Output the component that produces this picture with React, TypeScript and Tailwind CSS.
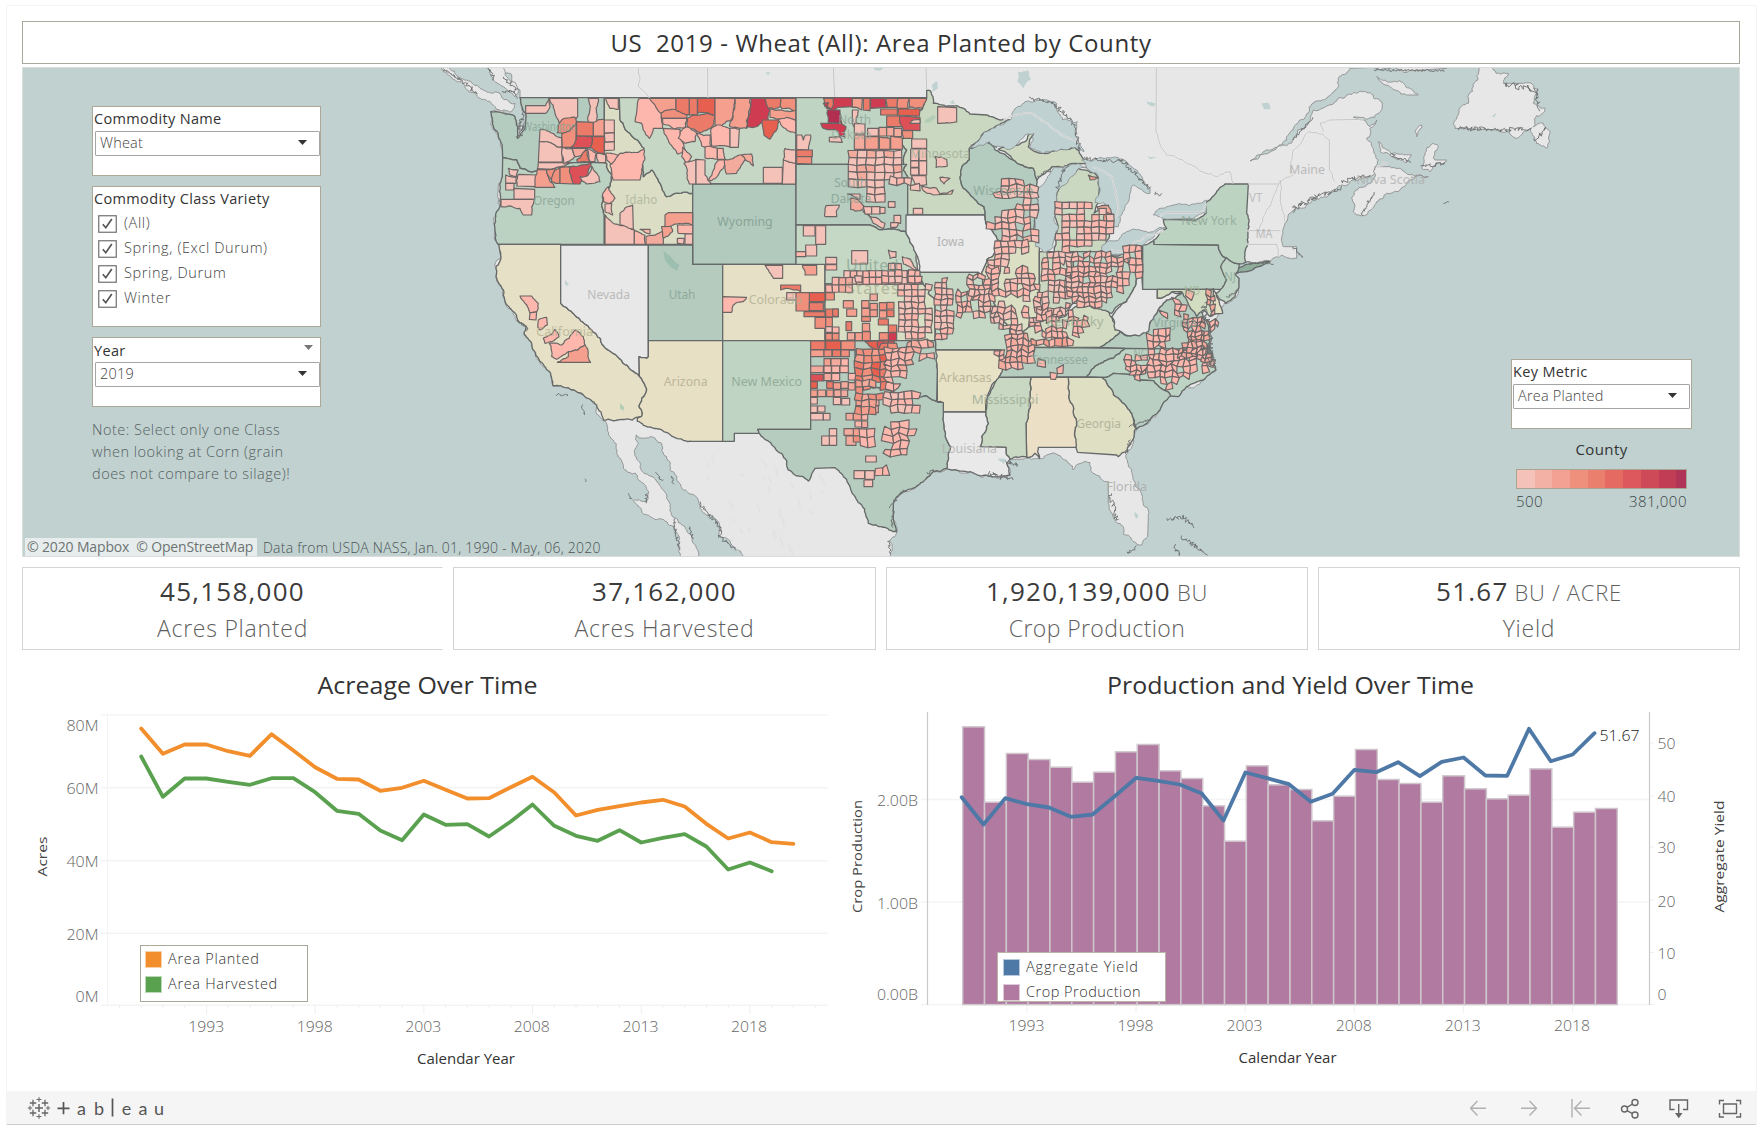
import React from "react";

type Pt = [number, number];

const RAMP = ["#f4c2b8", "#feb7ad", "#f3ab9d", "#f5a08f", "#f08f7c", "#ec7a68", "#e7604f", "#dd5057", "#cf3c52", "#b22f52"];

const hash = (a: number, b: number, s = 0) => {
  const v = Math.sin(a * 12.9898 + b * 78.233 + s * 37.719) * 43758.5453;
  return v - Math.floor(v);
};

const parse = (s: string): Pt[] => s.trim().split(/\s+/).map((p) => p.split(",").map(Number) as Pt);

/* Breaks long slanted segments into small irregular steps; borders that share end points stay identical. */
const roughen = (pts: Pt[], amp: number, closed = true): Pt[] => {
  const out: Pt[] = [];
  const split = (a: Pt, b: Pt, k: number): void => {
    const dx = b[0] - a[0];
    const dy = b[1] - a[1];
    const len = Math.hypot(dx, dy);
    if (len < 8 || k > 6 || (k === 0 && Math.min(Math.abs(dx), Math.abs(dy)) < Math.max(3, len * 0.07))) {
      out.push(a);
      return;
    }
    const h = (hash(a[0] + b[0], a[1] + b[1]) - 0.5) * Math.min(len, 60) * amp;
    const sx = Math.sign(dx * 1000 + dy) || 1;
    const m: Pt = [(a[0] + b[0]) / 2 - (dy / len) * h * sx, (a[1] + b[1]) / 2 + (dx / len) * h * sx];
    split(a, m, k + 1);
    split(m, b, k + 1);
  };
  const n = pts.length;
  for (let i = 0; i < (closed ? n : n - 1); i++) split(pts[i], pts[(i + 1) % n], 0);
  if (!closed) out.push(pts[n - 1]);
  return out;
};

const toD = (pts: Pt[], closed = true) => "M" + pts.map((p) => p[0].toFixed(1) + "," + p[1].toFixed(1)).join("L") + (closed ? "Z" : "");

const inside = (x: number, y: number, poly: Pt[]) => {
  let r = false;
  for (let i = 0, j = poly.length - 1; i < poly.length; j = i++) {
    const [xi, yi] = poly[i];
    const [xj, yj] = poly[j];
    if (yi > y !== yj > y && x < ((xj - xi) * (y - yi)) / (yj - yi) + xi) r = !r;
  }
  return r;
};

/* ---------- land ---------- */
const LAND: string[] = [
  "185,-20 190,10 180,30 215,45 222,70 240,90 240,113 248,150 232,235 225,170 152,155 157,180 175,225 187,265 188,292 187,350 180,440 165,510 175,553 183,590 168,650 190,690 195,725 235,785 258,800 252,820 275,850 277,865 300,905 332,940 340,978 385,983 430,1005 470,1035 490,1082 510,1130 530,1180 550,1225 610,1270 625,1300 615,1325 580,1322 630,1370 660,1375 700,1400 715,1500 780,1500 740,1410 690,1340 670,1290 600,1220 588,1125 610,1135 630,1130 665,1150 690,1230 730,1290 775,1320 780,1340 830,1380 840,1430 880,1460 910,1500 1345,1500 1350,1440 1370,1415 1360,1380 1360,1330 1390,1295 1450,1265 1480,1235 1520,1225 1590,1235 1660,1250 1710,1245 1700,1210 1760,1193 1820,1185 1870,1198 1900,1230 1950,1208 2005,1265 2005,1330 2040,1390 2080,1445 2105,1455 2123,1430 2125,1370 2100,1290 2075,1230 2062,1180 2088,1108 2160,1050 2192,1008 2240,980 2328,930 2310,870 2300,800 2340,760 2352,730 2395,700 2397,655 2385,643 2397,612 2420,605 2510,590 2570,595 2570,560 2530,560 2525,535 2535,490 2560,450 2620,415 2680,395 2705,375 2740,360 2805,340 2815,300 2780,235 2810,180 2790,200 2740,172 2780,178 2820,155 2825,125 2790,98 2720,105 2620,150 2560,235 2510,262 2430,303 2470,275 2540,240 2580,180 2620,130 2685,90 2695,60 2720,40 2730,25 2800,22 2920,32 3020,25 3020,-20",
  "0,20 30,25 80,60 120,85 180,100 225,130 215,155 170,148 110,105 60,65 10,35",
  "115,-10 150,30 160,60 190,80 225,110 235,95 200,50 190,-10",
  "2805,320 2850,320 2940,345 2965,350 2880,390 2810,425 2765,468 2740,455 2735,415 2790,370",
  "2945,325 2980,250 2995,260 2985,300 3020,300 2970,335",
  "2815,245 2840,270 2915,285 2895,308 2820,275",
  "2810,50 2880,62 2935,105 2900,105 2840,75",
  "3125,-10 3100,80 3085,130 3040,190 3045,205 3180,210 3230,235 3270,205 3285,240 3300,255 3320,265 3330,220 3310,190 3280,200 3315,145 3280,130 3295,90 3250,70 3190,70 3205,40 3160,30 3165,-10",
  "2925,215 2945,195 2930,230",
];
const WATERS: string[] = [
  "1588,265 1640,215 1710,180 1755,125 1790,120 1850,132 1868,180 1912,185 1908,228 1932,275 1905,262 1860,268 1810,280 1768,262 1782,220 1755,225 1735,250 1700,268 1665,262 1640,248",
  "1785,400 1840,325 1900,312 1945,322 1885,360 1850,400 1845,440 1855,500 1840,560 1810,577 1787,560 1785,470 1795,420",
  "1925,300 1975,295 2060,305 2090,330 2130,385 2130,400 2080,375 2070,400 2040,470 2035,500 2015,500 2005,440 1965,428 1978,400 1970,340 1940,325",
  "1985,560 2060,515 2175,503 2110,555 2050,582 2000,585",
  "2140,465 2180,440 2270,430 2300,420 2298,460 2260,475 2180,478 2160,470",
  "1735,35 1765,30 1772,60 1750,85 1732,65", "1475,75 1492,65 1495,85 1478,95", "1540,120 1530,130 1545,132",
  "2120,122 2150,135 2135,140", "2465,130 2485,128 2490,148 2472,148", "2120,290 2150,292 2130,298",
  "1668,1195 1700,1198 1690,1212", "2085,1355 2095,1365 2088,1378", "975,38 990,36 985,46", "375,660 387,672 380,680", "1300,25 1335,22 1320,32",
  "3160,165 3170,160 3155,172",
];
const FAINT: string[] = [
  "595,20 600,60 595,80 630,113", "803,20 803,113", "1180,20 1184,113", "1458,20 1460,90", "2149,20 2148,215 2180,285 2265,320 2330,350 2370,335 2378,370",
  "1690,180 1760,158 1920,250", "1960,320 2015,350 2032,460 2020,490", "2010,568 2045,575 2080,550 2170,510", "2160,470 2180,458 2280,458 2300,432",
  "2425,372 2515,372 2540,352 2560,345", "2515,372 2500,410 2470,470 2457,512 2520,512", "2420,512 2457,512", "2520,360 2527,450 2535,485", "2420,553 2510,553 2515,590",
  "2555,340 2560,270 2605,215 2650,225 2668,240 2668,330 2685,365", "2650,215 2640,190 2670,180 2770,178", "2810,320 2840,310 2825,305",
];

/* ---------- states ---------- */
const STATES: [string, string][] = [
  ["#b4ccbf", "240,113 493,113 493,308 400,308 335,328 297,330 275,337 240,325 230,300 188,292 187,265 175,225 157,180 152,155 225,170 232,235 255,205 258,165 248,150"],
  ["#bbd1c1", "188,292 230,300 240,325 275,337 297,330 335,328 400,308 493,308 500,310 515,345 510,380 487,410 493,465 493,553 175,553 165,510 180,440 187,350"],
  ["#e6e0c6", "175,553 362,553 362,730 598,948 620,988 605,1015 597,1040 607,1060 604,1070 490,1080 470,1035 430,1005 385,983 340,978 332,940 300,905 277,865 275,850 252,820 258,800 235,785 195,725 190,690 168,650 183,590"],
  ["#e8e8e8", "362,555 625,555 625,890 620,895 597,890 598,948 362,730"],
  ["#dbdec4", "493,113 538,113 540,180 570,220 612,265 600,300 610,350 635,330 660,370 680,410 758,400 758,553 493,553 493,465 487,410 510,380 515,345 500,310 493,308"],
  ["#c6d8c5", "538,113 1068,113 1068,372 758,372 758,400 680,410 660,370 635,330 610,350 600,300 612,265 570,220 540,180"],
  ["#b2cabd", "758,372 1068,372 1068,613 758,613"],
  ["#b4cbbe", "625,555 758,555 758,613 848,613 848,842 625,842"],
  ["#e6e1c6", "848,613 1155,613 1155,842 848,842"],
  ["#e7e0c5", "625,842 848,842 848,1144 755,1144 592,1084 592,1075 604,1070 607,1060 597,1040 605,1015 620,988 598,948 597,890 620,895 625,890"],
  ["#bfd4c2", "848,842 1112,842 1112,1108 953,1108 957,1120 883,1120 883,1144 848,1144"],
  ["#bfd4c3", "1068,113 1460,113 1448,145 1415,200 1385,240 1400,270 1390,313 1068,313"],
  ["#b6cdc0", "1068,313 1400,313 1390,330 1403,350 1403,465 1398,515 1340,508 1290,495 1068,495"],
  ["#c5d8c5", "1068,495 1290,495 1340,508 1398,515 1420,560 1432,630 1450,672 1155,672 1155,613 1068,613"],
  ["#d9dfc5", "1155,672 1450,672 1470,685 1465,700 1485,720 1485,842 1155,842"],
  ["#cbd8c1", "1460,113 1460,90 1470,92 1480,130 1530,138 1570,145 1590,162 1640,165 1710,180 1660,205 1588,265 1588,300 1563,330 1570,385 1632,440 1635,465 1403,465 1403,350 1390,330 1400,313 1390,313 1400,270 1385,240 1415,200 1448,145"],
  ["#ebebeb", "1398,465 1633,465 1637,490 1675,540 1670,575 1640,600 1625,650 1615,637 1435,637 1420,560 1398,515"],
  ["#c5d8c5", "1435,637 1615,637 1625,650 1660,720 1670,780 1710,800 1720,855 1692,895 1670,880 1685,870 1487,870 1485,720 1465,700 1470,685 1450,672"],
  ["#b4ccbf", "1588,265 1640,245 1655,252 1665,270 1720,300 1780,325 1790,355 1785,400 1795,420 1785,470 1775,543 1675,543 1637,490 1635,465 1632,440 1570,385 1563,330 1588,300"],
  ["#cdd9c0", "1675,268 1720,255 1755,245 1765,225 1788,213 1768,245 1765,260 1810,280 1860,268 1905,262 1945,305 1975,312 1900,310 1840,320 1805,345 1790,360 1780,325 1720,300"],
  ["#cbd8c1", "1843,575 1855,500 1845,440 1850,400 1885,350 1915,325 1965,340 1978,380 1975,430 1962,460 2000,430 2015,470 2015,510 1995,560 1985,575"],
  ["#dbdfc4", "1675,543 1798,543 1798,750 1790,780 1750,815 1720,855 1710,800 1670,780 1660,720 1625,650 1640,600 1670,575 1675,540"],
  ["#cbd7c0", "1798,575 1900,575 1900,730 1850,780 1790,785 1798,750"],
  ["#bdd3c3", "1900,575 1990,575 2020,588 2050,582 2105,553 2105,640 2060,725 2015,760 1975,750 1920,730 1900,730"],
  ["#d3dcc2", "1720,860 1750,815 1790,785 1850,780 1900,745 1920,730 1970,745 2005,755 2020,785 2040,815 1980,862 1760,862"],
  ["#b5ccbf", "1980,862 2040,815 2060,828 2105,820 2145,765 2180,720 2225,695 2250,700 2280,750 2305,790 2310,868 2055,865"],
  ["#e6e6e6", "2105,640 2108,688 2152,688 2152,715 2195,695 2225,700 2180,720 2145,765 2125,815 2070,828 2025,810 2015,770 2040,740 2060,725"],
  ["#b9d0c2", "2108,555 2142,540 2142,553 2335,555 2350,590 2358,595 2342,620 2360,655 2345,688 2108,688"],
  ["#bdd3c2", "2142,553 2142,540 2180,505 2170,478 2260,480 2298,460 2290,430 2355,372 2425,372 2420,460 2427,500 2417,605 2398,612 2358,593 2350,590 2335,555"],
  ["#8fae9b", "2390,630 2415,614 2490,605 2430,632 2385,643"],
  ["#bfd4c4", "2358,593 2398,612 2395,630 2385,643 2397,655 2385,710 2358,730 2335,712 2325,700 2360,660 2342,620"],
  ["#d2dcc0", "2152,688 2320,688 2345,760 2310,770 2290,750 2270,770 2240,720 2225,695 2195,695 2152,715"],
  ["#e4e0c4", "2320,685 2330,710 2348,760 2320,762"],
  ["#b5ccbf", "1720,880 1780,862 2055,865 2020,895 1960,925 1940,950 1675,952 1700,915"],
  ["#bdd3c3", "2055,865 2310,868 2328,930 2290,960 2240,980 2215,1010 2192,1008 2140,962 2095,960 2080,944 2020,940 1985,952 1940,950 1960,925 2020,895"],
  ["#b8cfc2", "1985,952 2020,940 2080,944 2095,960 2140,962 2192,1008 2160,1050 2130,1080 2088,1108 2080,1075 2050,1030 2000,970"],
  ["#dfdfc4", "1885,952 1985,952 2000,970 2050,1030 2080,1075 2088,1105 2075,1145 2062,1175 2050,1177 2035,1190 2030,1185 1913,1177 1905,1130 1910,1095 1900,1060"],
  ["#ebe0c6", "1772,952 1885,952 1900,1060 1910,1095 1905,1130 1908,1162 1795,1162 1798,1195 1785,1180 1775,1190 1760,1193 1758,1090"],
  ["#c9d8c2", "1675,952 1772,952 1758,1090 1760,1190 1710,1198 1698,1180 1698,1162 1620,1160 1625,1130 1645,1090 1637,1056 1640,1020 1660,980"],
  ["#e7e1c6", "1487,870 1685,870 1670,880 1700,895 1688,925 1675,955 1650,990 1637,1025 1637,1056 1510,1056 1510,1028 1492,1025 1492,930"],
  ["#e9e9e9", "1510,1056 1637,1056 1645,1090 1625,1130 1620,1160 1698,1162 1698,1180 1710,1198 1700,1210 1710,1245 1660,1250 1590,1235 1520,1225 1525,1190 1532,1160 1515,1115 1510,1070"],
  ["#b6cdc0", "1112,842 1485,842 1492,930 1490,1025 1460,1008 1400,1015 1340,990 1300,985 1245,970 1245,870 1112,870"],
  ["#b6ccbf", "1112,870 1245,870 1245,970 1300,985 1340,990 1400,1015 1460,1008 1490,1025 1510,1028 1510,1070 1515,1115 1532,1160 1525,1190 1520,1225 1480,1235 1450,1265 1390,1295 1360,1330 1360,1380 1370,1415 1285,1390 1265,1335 1235,1295 1210,1250 1185,1223 1125,1225 1105,1263 1065,1245 1045,1230 1025,1180 957,1120 953,1108 1112,1108"],
];

/* ---------- counties drawn one by one: ramp index, then outline ---------- */
const COUNTIES: [number, string][] = [
  [0, "257,137 317,137 327,115 330,140 317,160 257,160"], [0, "327,115 413,115 413,170 405,180 370,178 357,188 345,160"],
  [0, "445,115 475,115 468,145 473,190 445,185 450,150"], [0, "300,208 365,232 366,262 298,245"], [0, "298,245 366,262 367,306 295,306"],
  [0, "295,308 400,308 335,328 292,326"], [4, "365,180 405,172 408,195 375,220 352,218"], [4, "408,195 408,262 367,262 365,222"],
  [5, "410,185 460,187 460,228 410,228"], [3, "460,187 493,178 493,228 460,228"], [7, "410,228 455,230 452,263 392,263"],
  [6, "455,230 493,230 493,280 452,263"], [0, "493,180 523,180 523,218 493,220"], [0, "493,220 523,218 523,245 495,247"],
  [0, "493,247 523,245 523,270 493,272"], [0, "367,262 395,265 405,290 372,312"], [2, "395,265 440,265 425,285 405,290"],
  [5, "410,300 440,270 450,305 415,308"], [1, "440,265 470,280 465,305 450,305"], [0, "470,280 497,285 497,308 475,308"],
  [0, "497,115 535,115 535,148 510,145"],
  [0, "205,325 235,330 230,350 210,345"], [0, "197,345 228,350 228,370 197,370"], [0, "197,370 222,370 222,390 197,390"],
  [0, "235,343 292,345 285,380 230,378"], [0, "222,385 284,388 284,418 222,418"], [0, "183,418 284,418 275,465 250,465 240,445 183,440"],
  [3, "285,355 292,328 320,330 330,365 345,382 285,382"], [4, "320,330 345,325 340,365"], [4, "345,330 360,322 360,370 335,365"],
  [4, "360,322 390,320 400,372 360,370"], [7, "388,320 453,308 445,345 420,372 402,372"], [0, "420,350 445,345 455,318 480,365 440,372"],
  [1, "510,315 540,280 612,268 605,330 600,360 520,360 515,335"], [1, "497,280 535,285 515,312 500,300"],
  [1, "487,405 505,380 525,415 510,430 490,425"], [0, "495,432 515,430 518,465 495,455"], [0, "495,465 520,490 583,510 583,553 495,553"],
  [0, "540,460 578,435 580,508 540,495"], [1, "583,510 615,525 618,553 583,553"], [2, "618,530 670,515 670,553 618,553"],
  [1, "600,508 630,508 630,522"], [3, "665,500 690,495 698,515 670,535"], [3, "675,465 685,458 758,458 758,495 735,490 675,500"],
  [1, "712,495 758,495 758,522 715,520"], [0, "735,522 758,522 758,553 735,553"], [0, "712,535 733,535 730,553 712,550"],
  [1, "598,115 630,115 665,165 668,205 640,205 628,235 610,210 605,190 585,185 592,140"], [3, "628,115 708,115 708,150 663,160"],
  [4, "663,160 708,148 742,158 740,175 665,175"], [5, "708,115 748,115 748,165 708,150"], [5, "748,115 772,115 772,168 748,165"],
  [6, "773,115 825,115 825,165 773,160"], [5, "742,175 800,160 825,168 820,195 780,218 745,205"], [1, "668,175 740,175 735,205 700,208 668,190"],
  [3, "825,115 883,115 873,180 825,210"], [3, "883,115 930,115 920,205 868,198"], [8, "932,115 978,115 990,150 985,180 920,203"],
  [5, "975,115 1022,115 1022,140 985,145"], [4, "1022,115 1067,115 1067,152 1025,145"], [3, "990,145 1067,152 1067,180 990,172"],
  [1, "1015,180 1040,172 1067,182 1067,220 1035,205"], [6, "968,180 1015,180 1012,205 990,238 972,225"],
  [1, "668,205 720,208 730,250 735,270 712,282 685,240"], [1, "720,215 740,200 770,218 765,245 735,250 715,235"],
  [1, "770,220 812,225 815,262 785,258"], [1, "812,210 830,195 870,205 870,262 815,258"], [0, "870,205 898,208 895,262 870,262"],
  [1, "795,262 832,265 832,297 795,293"], [1, "728,262 755,290 740,310 725,290"], [0, "732,310 768,298 768,372 748,372 742,330"],
  [0, "768,298 795,300 795,345 815,372 768,372"], [1, "803,360 835,300 855,300 850,325 815,362"], [1, "832,265 850,265 855,298 832,298"],
  [2, "855,298 900,285 920,295 890,340 860,342"], [2, "905,285 935,282 940,318 915,298"], [0, "970,322 1027,322 1027,370 970,370"],
  [0, "1030,300 1067,310 1067,372 1027,372"], [0, "1035,265 1067,270 1067,310 1030,300"],
  [0, "1070,225 1085,225 1090,240 1097,225 1112,225 1105,270 1070,268"], [5, "1070,270 1117,270 1117,290 1070,290"], [4, "1070,290 1115,290 1115,312 1070,310"],
  [0, "975,616 1028,616 1028,655 1000,655"], [3, "1087,616 1130,616 1130,645 1095,645"], [5, "1022,675 1082,675 1082,695 1022,690"],
  [1, "848,710 920,712 910,725 880,735 875,757 848,757"],
  [1, "240,708 275,708 295,730 290,755 270,758 255,730"], [1, "270,758 290,755 288,780 268,778"], [1, "295,780 320,772 322,795 300,810 293,800"],
  [1, "310,835 345,808 357,830 330,845 315,850"], [1, "328,850 365,855 405,810 430,830 435,855 385,875 350,898 335,890"],
  [3, "385,875 435,855 452,907 352,907 385,890"], [0, "1040,698 1080,698 1080,735 1070,735 1068,720 1040,720"],
  /* North Dakota and Minnesota */
  [8, "1180,113 1237,113 1237,140 1195,142 1180,155 1160,145"], [5, "1150,115 1180,115 1175,145 1155,140"], [8, "1150,130 1165,128 1162,145"],
  [9, "1162,150 1200,150 1205,190 1165,188"], [8, "1142,190 1202,190 1218,200 1215,232 1200,228 1185,208 1150,205"],
  [0, "1168,232 1200,230 1207,247 1168,245"], [3, "1237,115 1267,115 1265,150 1237,142"], [5, "1270,115 1290,115 1290,152 1270,150"],
  [8, "1292,115 1335,115 1340,142 1292,145"], [5, "1338,115 1375,115 1375,142 1342,142"], [4, "1375,115 1408,115 1405,145 1372,145"],
  [4, "1408,115 1460,115 1445,145 1408,142"], [5, "1322,147 1372,147 1372,165 1322,165"], [6, "1375,147 1440,147 1438,168 1372,165"],
  [5, "1340,168 1380,168 1388,200 1340,200"], [7, "1378,168 1440,172 1440,212 1390,210"], [4, "1385,212 1418,212 1418,235 1390,235"],
  [0, "1420,180 1440,178 1440,190 1410,190"], [0, "1493,140 1550,143 1550,186 1493,190"],
  [0, "1237,150 1255,150 1250,215 1237,190"], [0, "1243,190 1275,192 1275,222 1243,222"],
  [2, "1243,225 1275,225 1275,268 1243,268"], [3, "1275,230 1315,230 1315,268 1275,268"], [3, "1318,230 1350,235 1350,268 1318,268"], [3, "1352,230 1387,235 1387,268 1352,268"],
  [0, "1283,205 1315,205 1315,228 1283,228"], [2, "1317,202 1340,202 1340,228 1317,228"], [2, "1340,202 1362,202 1362,228 1340,228"], [2, "1362,205 1385,205 1385,230 1362,230"],
  [0, "1415,237 1460,237 1460,265 1415,265"], [0, "1485,290 1520,298 1522,318 1488,322"], [0, "1500,352 1530,355 1512,372"],
  [0, "1445,380 1490,385 1500,402 1540,390 1535,402 1480,405 1450,392"], [0, "1415,347 1458,347 1460,375 1425,372"], [0, "1420,445 1448,445 1448,463 1420,463"],
  [0, "1437,267 1460,267 1460,302 1437,302"], [0, "1412,267 1436,267 1436,302 1412,302"], [0, "1412,303 1436,303 1436,322 1412,322"], [0, "1437,303 1460,303 1460,345 1437,345"], [0, "1412,324 1436,324 1436,345 1412,345"],
  /* South Dakota and Nebraska */
  [2, "1232,415 1250,418 1275,440 1262,452 1232,448"], [0, "1268,452 1290,470 1335,490 1330,505 1300,490"], [0, "1158,437 1198,435 1190,470 1155,470"],
  [0, "1222,402 1260,402 1260,418"], [0, "1270,440 1295,440 1295,462 1275,462"], [0, "1295,440 1320,440 1320,462 1295,462"], [0, "1320,442 1335,442 1335,460 1320,460"], [0, "1345,425 1365,425 1365,442 1345,442"], [0, "1362,466 1382,466 1382,490 1362,488"], [0, "1352,488 1375,488 1370,502 1352,502"],
  [0, "1235,572 1283,572 1283,612 1235,612"], [0, "1345,570 1368,575 1368,592 1350,595"], [0, "1387,590 1412,598 1432,632 1390,612"], [0, "1157,592 1190,592 1190,612 1157,612"], [1, "1157,614 1190,614 1190,630 1157,630"],
  [3, "1945,345 1975,352 1950,360"], [2, "1970,440 2005,435 2015,465 1980,455"], [3, "1990,458 2015,465 2018,510 1995,515"],
  [6, "1275,845 1325,842 1360,842 1345,880 1310,870"],
];

/* ---------- counties laid out on the survey grid: x y w h ramp ---------- */
const RECTS = `
1090 497 35 31 0;1127 497 30 56 0;1097 555 33 33 0;1068 575 29 15 1
1108 698 47 27 6;1068 698 40 55 4;1108 728 42 24 5;1092 755 63 15 5;1125 772 32 33 4
1157 698 26 22 4;1157 747 38 24 5;1157 772 20 32 4;1178 747 17 22 5;1210 722 30 22 3;1220 747 30 22 3
1157 800 20 17 0;1177 801 20 18 1;1157 820 20 20 4;1177 820 20 20 4;1218 785 17 27 5;1265 722 22 22 3;1265 745 25 24 3;1290 702 22 20 2
1290 730 22 20 3;1290 750 22 20 3;1265 770 26 14 4;1315 777 30 18 5;1340 727 22 20 4;1340 750 22 20 5;1345 795 25 22 5;1345 818 25 24 8
1318 818 27 22 4;1267 790 22 24 3;1267 815 24 27 4;1245 818 22 24 3;1222 818 22 22 2;1318 752 22 22 3;1318 728 22 22 4
1112 843 43 26 5;1157 843 45 26 6;1203 843 42 26 4;1112 870 40 20 3;1152 870 24 20 4;1177 870 25 20 5;1203 870 25 20 4
1152 896 20 22 3;1173 896 30 22 2;1203 896 22 22 1;1112 918 38 20 2;1152 918 22 20 1;1175 918 24 20 1;1200 918 25 20 1
1112 943 38 20 7;1152 940 22 22 2;1175 940 24 22 1;1225 940 22 20 1;1112 965 20 20 6;1160 965 20 20 5;1180 968 22 20 3;1203 965 22 20 2;1225 968 20 22 2
1112 990 20 20 3;1133 990 24 20 2;1160 990 20 20 3;1182 990 22 20 2;1203 990 20 20 2;1112 1012 20 20 0;1180 1012 22 22 0;1205 1015 24 20 0
1112 1038 20 20 0;1133 1038 22 18 0;1112 1060 38 20 0;1150 1060 20 20 0;1168 1106 22 22 0;1145 1128 24 28 0;1168 1128 22 28 0
1218 1060 22 20 2;1240 1060 24 20 3;1265 1060 18 20 1;1245 1083 20 18 1;1265 1083 18 20 2;1212 1106 30 20 2;1240 1106 20 22 3;1218 1128 30 28 2;1240 1128 24 18 4
1277 1188 32 18 0;1242 1232 32 24 0;1275 1232 28 26 0;1272 1260 26 20 0
1248 1015 22 22 3;1270 1015 24 22 4;1295 1015 22 22 2;1248 1038 22 22 4;1270 1038 24 22 3;1295 1038 20 20 2
1276 925 30 18 6;1290 890 20 28 7;1328 862 30 22 8;1345 843 18 20 7;1312 843 20 18 7;1330 885 18 22 7;1270 945 30 18 5
`.trim().split(/[;\n]/).map((r) => r.trim().split(/\s+/).map(Number));

/* ---------- dense areas, filled with small irregular cells ---------- */
type Patch = { p: string; w: number; h: number; d: number; j: number; c: number[]; s: number };
const PATCHES: Patch[] = [
  { p: "1225,270 1395,270 1400,355 1330,360 1340,420 1270,425 1275,385 1225,380", w: 27, h: 22, d: 0.96, j: 0.12, c: [0, 0, 0, 2], s: 1 },
  { p: "1370,310 1430,375 1430,400 1350,400", w: 22, h: 20, d: 0.6, j: 0.3, c: [0, 1], s: 2 },
  { p: "1212,632 1445,632 1445,675 1230,675", w: 19, h: 20, d: 0.96, j: 0.04, c: [1, 0], s: 3 },
  { p: "1157,652 1235,652 1235,696 1157,696", w: 20, h: 22, d: 0.95, j: 0.04, c: [2, 1], s: 4 },
  { p: "1260,610 1380,610 1440,640 1440,660 1245,660", w: 20, h: 19, d: 0.5, j: 0.12, c: [0, 1], s: 5 },
  { p: "1375,672 1470,672 1485,700 1485,842 1375,820", w: 20, h: 18, d: 0.86, j: 0.16, c: [1, 0, 0], s: 6 },
  { p: "1485,650 1545,650 1545,790 1530,820 1485,850", w: 18, h: 17, d: 0.68, j: 0.24, c: [1, 0], s: 7 },
  { p: "1550,690 1600,690 1590,770 1550,770", w: 15, h: 16, d: 0.85, j: 0.4, c: [1], s: 8 },
  { p: "1585,640 1660,640 1670,700 1675,780 1600,770", w: 16, h: 16, d: 0.86, j: 0.42, c: [1, 0], s: 9 },
  { p: "1255,860 1300,860 1360,845 1360,970 1310,990 1245,970 1245,900", w: 25, h: 20, d: 0.92, j: 0.25, c: [3, 4, 5, 6, 4], s: 10 },
  { p: "1250,960 1330,975 1330,1010 1300,1060 1245,1060", w: 21, h: 20, d: 0.92, j: 0.2, c: [3, 4, 4, 2], s: 11 },
  { p: "1340,870 1400,850 1485,842 1485,890 1420,900 1380,960 1385,1000 1335,985", w: 21, h: 18, d: 0.78, j: 0.35, c: [1, 2, 1], s: 12 },
  { p: "1330,1000 1410,995 1455,1015 1430,1060 1330,1060", w: 22, h: 20, d: 0.82, j: 0.25, c: [1, 1, 0], s: 13 },
  { p: "1350,1080 1405,1080 1420,1110 1395,1180 1340,1190 1330,1120", w: 24, h: 21, d: 0.93, j: 0.38, c: [1], s: 14 },
  { p: "1258,1106 1300,1106 1312,1162 1262,1162", w: 23, h: 26, d: 1, j: 0.2, c: [1, 1], s: 15 },
  { p: "1305,1225 1345,1220 1350,1270 1315,1250", w: 20, h: 22, d: 0.7, j: 0.4, c: [1], s: 16 },
  /* Wisconsin, Illinois */
  { p: "1647,370 1720,360 1800,355 1795,420 1780,480 1785,540 1690,540 1680,500 1640,500 1660,470 1720,440 1750,420 1670,415", w: 22, h: 19, d: 0.85, j: 0.26, c: [1, 0], s: 17 },
  { p: "1675,540 1770,540 1765,600 1720,600 1660,640 1645,620", w: 20, h: 19, d: 0.78, j: 0.25, c: [1, 0], s: 18 },
  { p: "1640,620 1780,620 1798,700 1798,780 1740,820 1700,830 1670,770 1660,700", w: 18, h: 17, d: 0.66, j: 0.35, c: [1, 0], s: 19 },
  /* Michigan, Indiana, Ohio */
  { p: "1845,425 1975,425 2015,460 2015,520 1985,560 1848,575 1860,500", w: 22, h: 19, d: 0.78, j: 0.1, c: [1, 0], s: 20 },
  { p: "1800,575 1900,575 1900,720 1850,780 1790,790 1800,680", w: 17, h: 17, d: 0.62, j: 0.3, c: [1, 0], s: 21 },
  { p: "1880,575 2000,580 2060,590 2050,650 2010,700 1980,740 1890,730", w: 17, h: 15, d: 0.88, j: 0.34, c: [1, 0, 1], s: 22 },
  { p: "2050,560 2105,555 2105,640 2060,680 2030,690", w: 19, h: 20, d: 0.75, j: 0.2, c: [1], s: 23 },
  /* Kentucky, Tennessee, Bootheel */
  { p: "1770,770 1860,750 1940,765 1935,830 1860,850 1770,800", w: 16, h: 16, d: 0.58, j: 0.4, c: [1], s: 24 },
  { p: "1690,820 1775,820 1775,900 1735,925 1680,930 1690,880", w: 17, h: 17, d: 0.88, j: 0.38, c: [1, 2], s: 25 },
  { p: "1775,835 1895,835 1890,862 1775,862", w: 18, h: 20, d: 0.88, j: 0.3, c: [1, 3], s: 26 },
  { p: "1800,900 1875,905 1870,952 1795,948", w: 18, h: 18, d: 0.68, j: 0.3, c: [1], s: 27 },
  { p: "1935,900 1975,905 1960,945 1925,935", w: 20, h: 18, d: 0.6, j: 0.4, c: [1], s: 28 },
  { p: "1660,870 1700,870 1690,895", w: 17, h: 14, d: 1, j: 0.3, c: [1], s: 29 },
  /* Virginia and the Carolinas */
  { p: "2125,820 2180,805 2200,860 2120,862", w: 18, h: 18, d: 0.88, j: 0.4, c: [1], s: 30 },
  { p: "2160,750 2240,695 2255,690 2240,770 2170,775", w: 20, h: 20, d: 0.6, j: 0.42, c: [1], s: 31 },
  { p: "2230,760 2295,780 2310,860 2240,860", w: 13, h: 13, d: 0.82, j: 0.45, c: [1, 2], s: 32 },
  { p: "2300,690 2322,690 2335,800 2305,810", w: 12, h: 15, d: 0.6, j: 0.45, c: [1, 2], s: 33 },
  { p: "2125,865 2305,865 2320,920 2240,945 2180,985 2160,975 2130,940", w: 18, h: 17, d: 0.84, j: 0.38, c: [1], s: 34 },
  { p: "2055,885 2125,885 2125,930 2100,960 2055,935", w: 16, h: 15, d: 0.9, j: 0.38, c: [1], s: 35 },
  { p: "2200,855 2300,845 2310,900 2220,890", w: 14, h: 15, d: 0.8, j: 0.42, c: [1, 2], s: 36 },
];

const patchCells = ({ p, w, h, d, j, c, s }: Patch) => {
  const poly = parse(p);
  const xs = poly.map((q) => q[0]);
  const ys = poly.map((q) => q[1]);
  const x0 = Math.min(...xs);
  const y0 = Math.min(...ys);
  const nx = Math.ceil((Math.max(...xs) - x0) / w);
  const ny = Math.ceil((Math.max(...ys) - y0) / h);
  const V = (i: number, k: number): Pt => [
    x0 + i * w + (hash(i, k, s) - 0.5) * w * j * 1.5,
    y0 + k * h + (hash(i + 31, k + 17, s) - 0.5) * h * j * 1.5 + (i % 2) * h * j * 0.7,
  ];
  const out: { d: string; fill: string }[] = [];
  for (let i = 0; i < nx; i++)
    for (let k = 0; k < ny; k++) {
      if (!inside(x0 + (i + 0.5) * w, y0 + (k + 0.5) * h, poly) || hash(i * 3 + 1, k * 7 + 2, s) > d) continue;
      out.push({ d: toD([V(i, k), V(i + 1, k), V(i + 1, k + 1), V(i, k + 1)]), fill: RAMP[c[Math.floor(hash(i, k, s + 50) * c.length)]] });
    }
  return out;
};

const SHORE: [string, number][] = [
  ["250,150 245,180 235,200 258,200 232,235", 9], ["185,100 215,90 235,112", 5], ["60,60 110,100", 8], ["10,25 60,60", 7], ["125,5 150,30 160,60", 8], ["190,50 230,90", 7],
  ["235,780 258,800 265,815", 5], ["2290,730 2300,780 2312,860 2320,920", 12], ["2300,860 2318,925", 12], ["2420,608 2500,610", 4], ["2560,560 2590,590", 7],
  ["2555,450 2620,415 2700,385", 9], ["2705,365 2790,345", 7], ["2560,240 2620,170", 4], ["3190,70 3290,90", 11], ["3060,205 3200,210 3270,205", 8], ["3285,90 3300,150", 8],
  ["3285,240 3320,200", 8], ["2850,285 2910,305", 7], ["2945,320 3020,310", 6], ["2800,30 3010,32", 4], ["2800,400 2765,465", 5], ["1640,1240 1710,1260", 11], ["1700,1205 1740,1215", 8],
  ["2010,1300 2030,1380", 7], ["2060,1180 2070,1140", 6], ["1350,1340 1365,1320 1395,1290", 6], ["1460,1240 1480,1230", 6], ["1360,1350 1355,1400", 4],
  ["1770,115 1840,130 1900,190 1920,270", 7], ["1935,295 2050,305 2130,385", 7], ["1880,320 1850,385", 9], ["1795,350 1840,322", 8], ["2090,1460 2060,1480", 5],
  ["2180,1380 2230,1370 2260,1400", 7], ["2220,1430 2270,1460 2300,1480", 7], ["2205,1455 2215,1485", 7], ["345,1003 385,1005", 4], ["425,1035 435,1065", 4], ["1345,1440 1350,1480", 5],
  ["780,1330 840,1400 840,1430 890,1470", 6], ["620,1300 615,1330", 5], ["700,1380 720,1470", 6], ["650,1240 665,1265", 6], ["690,1250 705,1270", 6], ["745,1400 760,1440", 5],
  ["435,1255 438,1268", 3], ["565,1300 575,1320", 4], ["3010,430 3025,425", 2], ["2360,712 2395,690", 4], ["2065,1100 2130,1078", 4], ["1645,250 1670,258", 6], ["2145,400 2160,405", 6],
];

const squiggle = (s: string, amp: number) => {
  const pts = parse(s);
  const out: Pt[] = [];
  for (let i = 0; i < pts.length - 1; i++) {
    const [a, b] = [pts[i], pts[i + 1]];
    const n = Math.max(2, Math.round(Math.hypot(b[0] - a[0], b[1] - a[1]) / 3.5));
    for (let k = 0; k <= n; k++)
      out.push([a[0] + ((b[0] - a[0]) * k) / n + (hash(k, i, a[0]) - 0.5) * amp * 1.8, a[1] + ((b[1] - a[1]) * k) / n + (hash(k, i, a[1] + 9) - 0.5) * amp * 1.8]);
  }
  return toD(out, false);
};

const LABELS: [string, number, number, number, string][] = [
  ["Washington", 330, 213, 160, "#86a496"], ["Oregon", 342, 436, 124, "#8aa494"], ["Idaho", 604, 431, 96, "#aab39c"], ["Wyoming", 915, 497, 166, "#7f9c8f"], ["Nevada", 506, 717, 128, "#b0b0b0"],
  ["Utah", 726, 717, 80, "#86a294"], ["Colorado", 1006, 731, 160, "#b3b093"], ["Iowa", 1532, 557, 82, "#a8a8a8"], ["California", 374, 828, 170, "#b8b394"], ["Arizona", 737, 979, 132, "#b3ad92"],
  ["New Mexico", 980, 979, 212, "#8ba592"], ["Arkansas", 1576, 966, 158, "#b0aa8d"], ["Mississippi", 1695, 1032, 200, "#98aa95"], ["Louisiana", 1588, 1179, 166, "#b0b0b0"], ["Georgia", 1976, 1103, 134, "#aaac93"],
  ["Florida", 2060, 1294, 122, "#ababab"], ["Tennessee", 1858, 912, 172, "#8ba598"], ["Kentucky", 1905, 799, 172, "#a0ad95"], ["Minnesota", 1500, 295, 180, "#a3b19c"], ["North", 1244, 191, 98, "#8da799"],
  ["Dakota", 1234, 236, 120, "#9bac9c"], ["South", 1232, 382, 98, "#86a294"], ["Dakota", 1233, 428, 122, "#86a294"], ["Wisconsin", 1690, 404, 180, "#86a294"], ["New York", 2307, 496, 166, "#8fa795"],
  ["Maine", 2601, 342, 108, "#b0b0b0"], ["Nova Scotia", 2852, 373, 206, "#b0b0b0"], ["VT", 2447, 426, 40, "#b5b5b5"], ["MA", 2472, 535, 50, "#b0b0b0"], ["Virginia", 2205, 802, 130, "#8aa396"],
  ["NJ", 2370, 664, 36, "#8fae9b"], ["MD", 2256, 704, 48, "#a3b795"], ["NC", 2100, 895, 40, "#95ad9c"],
];

const UsMap = () => (
  <svg className="block h-full w-full" viewBox="-1254 21 5154 1470" preserveAspectRatio="none" strokeLinejoin="round">
    <g fill="#e7e7e7" stroke="#8c8c8c" strokeWidth="2.6">
      {LAND.map((l, i) => <path key={i} d={toD(roughen(parse(l), 0.42))} />)}
    </g>
    <g fill="none" stroke="#dedede" strokeWidth="5" opacity="0.5">
      {Array.from({ length: 40 }, (_, i) => {
        const x = 800 + hash(i, 11) * 350;
        const y = 1170 + hash(i, 12) * 300;
        return <path key={i} d={`M${x},${y}q4,12 ${hash(i, 15) * 14},${hash(i, 16) * 34}`} />;
      })}
    </g>
    <g>
      {STATES.map(([c, p], i) => <path key={i} d={toD(roughen(parse(p), 0.24))} fill={c} stroke="#666969" strokeWidth="4" />)}
    </g>
    <path d="M670,573 690,588 705,605 718,615 712,632 690,620 675,600z" fill="#9dbfb1" />
    <path d="M1455,180 1480,165 1488,172 1470,188 1455,188z M540,1030 553,1042 550,1052 540,1045z" fill="#b3ccb5" />
    <g fill="#bfd1d1" stroke="#84898a" strokeWidth="2.4">
      {WATERS.map((l, i) => <path key={i} d={toD(roughen(parse(l), 0.34))} stroke={i < 5 ? undefined : "none"} />)}
    </g>
    <g fill="none" stroke="#efefef" strokeWidth="5">
      {FAINT.map((l, i) => <path key={i} d={toD(roughen(parse(l), 0.2, false), false)} />)}
    </g>
    <g fill="none" stroke="#b3b3b3" strokeWidth="2.2">
      {FAINT.map((l, i) => <path key={i} d={toD(roughen(parse(l), 0.2, false), false)} />)}
    </g>
    <g stroke="#6b6565" strokeWidth="3.5">
      {COUNTIES.map(([c, p], i) => <path key={i} d={toD(roughen(parse(p), 0.24))} fill={RAMP[c]} />)}
      {RECTS.map(([x, y, w, h, c], i) => <rect key={i} x={x} y={y} width={w} height={h} fill={RAMP[c]} />)}
      {PATCHES.map((p, i) => (
        <g key={i}>{patchCells(p).map((c, k) => <path key={k} d={c.d} fill={c.fill} />)}</g>
      ))}
    </g>
    <g fill="none" stroke="#6f7272" strokeWidth="2.8">
      {SHORE.map(([s, a], i) => <path key={i} d={squiggle(s, a)} />)}
    </g>
    <g style={{ fontFamily: '"Noto Sans", "Open Sans", sans-serif' }} fontSize="39" textAnchor="middle">
      {LABELS.map(([t, x, y, w, c], i) => (
        <text key={i} x={x} y={y} textLength={w} lengthAdjust="spacingAndGlyphs" fill={c} opacity={0.8}>{t}</text>
      ))}
      <text x="1297" y="634" fontSize="48" textLength="158" fill="#6f8b79" opacity="0.5">United</text>
      <text x="1297" y="702" fontSize="48" textLength="158" fill="#8a9377" opacity="0.5">States</text>
    </g>
  </svg>
);

/* ---------- shared bits ---------- */
type TProps = { x: number; y: number; w?: number; size?: number; fill?: string; anchor?: "start" | "middle" | "end"; weight?: number; rot?: boolean; children: string };
const T = ({ x, y, w, size = 15, fill = "#666", anchor = "middle", weight = 300, rot, children }: TProps) => (
  <text x={x} y={y} fontSize={size} fill={fill} textAnchor={anchor} fontWeight={weight} textLength={w} lengthAdjust="spacingAndGlyphs" dominantBaseline="central" transform={rot ? `rotate(-90 ${x} ${y})` : undefined}>
    {children}
  </text>
);

const Caret = ({ className = "" }: { className?: string }) => (
  <svg className={`h-[5px] w-[9px] shrink-0 ${className}`} viewBox="0 0 9 5"><path d="M0 0h9L4.5 5z" fill="currentColor" /></svg>
);

const Select = ({ value, className = "", pad = "pr-[12px]" }: { value: string; className?: string; pad?: string }) => (
  <div className={`flex h-[25px] items-center justify-between rounded-[1px] border border-[#a5a5a5] bg-white pl-1 font-light text-[#444] ${pad} ${className}`}>
    <span className="text-[14.5px] leading-none tracking-[0.2px]">{value}</span>
    <Caret className="mb-0.5 text-[#333]" />
  </div>
);

const Swatch = ({ color, label, spacing }: { color: string; label: string; spacing: string }) => (
  <div className="flex h-[25px] items-center gap-1.5">
    <span className="h-[17px] w-[17px] border border-white/60" style={{ backgroundColor: color }} />
    <span className={`text-[14.5px] font-light leading-none text-[#333] ${spacing}`}>{label}</span>
  </div>
);

/* ---------- charts ---------- */
const PLANTED = [504, 580, 552, 552, 572, 586, 521, 570, 620, 655, 657, 691, 682, 661, 688, 714, 713, 680, 649, 696, 765, 748, 737, 726, 718, 738, 790, 834, 816, 845, 850];
const HARVESTED = [588, 709, 654, 654, 664, 673, 653, 653, 695, 751, 760, 810, 839, 762, 793, 791, 828, 783, 732, 796, 826, 841, 809, 846, 832, 821, 858, 927, 906, 932];
const PRODUCTION = [499, 725, 579, 597, 620, 665, 635, 574, 552, 631, 654, 736, 842, 616, 673, 687, 781, 707, 567, 657, 669, 725, 646, 685, 715, 704, 625, 800, 755, 744];
const YIELD = [710, 792, 713, 731, 741, 769, 762, 708, 652, 661, 672, 699, 780, 636, 653, 671, 724, 700, 628, 635, 605, 647, 604, 591, 645, 646, 505, 602, 582, 518];
const line = (vals: number[], x0: number, step: number) => vals.map((v, i) => `${(x0 + i * step).toFixed(1)},${(560.5 + v / 3).toFixed(1)}`).join(" ");
const YEARS = [1993, 1998, 2003, 2008, 2013, 2018];

const AcreageChart = () => (
  <div className="relative h-[429px] w-[813px]">
    <svg className="block h-full w-full" viewBox="22 662 813 429">
      <T x={427.5} y={684.5} w={220} size={23.5} fill="#333" weight={400}>Acreage Over Time</T>
      {[715, 787.7, 860.7, 933.3, 1005.3].map((y) => <path key={y} d={`M101,${y}H828`} stroke="#f4f4f4" strokeWidth="1.6" />)}
      <path d="M107.5,713V1005" stroke="#f4f4f4" />
      {Array.from({ length: 33 }, (_, i) => <path key={i} d={`M${119.5 + i * 21.74},1005v${i % 5 === 4 ? 9 : 3}`} stroke="#efefef" />)}
      {([["80M", 725, 32], ["60M", 788, 32], ["40M", 861, 32], ["20M", 933.5, 32], ["0M", 995.5, 23]] as const).map(([t, y, w]) => (
        <T key={t} x={98.5} y={y} w={w} anchor="end">{t}</T>
      ))}
      {YEARS.map((y, i) => <T key={y} x={206.2 + i * 108.55} y={1025.5} w={36}>{String(y)}</T>)}
      <T x={466} y={1058} w={98} size={14.5} fill="#333" weight={400}>Calendar Year</T>
      <T x={42} y={856.5} w={40} size={13.5} fill="#444" weight={400} rot>Acres</T>
      <polyline points={line(HARVESTED, 141.2, 21.74)} fill="none" stroke="#59a14f" strokeWidth="3.8" strokeLinejoin="round" strokeLinecap="round" />
      <polyline points={line(PLANTED, 141.2, 21.74)} fill="none" stroke="#f28e2b" strokeWidth="3.8" strokeLinejoin="round" strokeLinecap="round" />
    </svg>
    <div className="absolute left-[118px] top-[283px] h-[57px] w-[168px] border border-[#aaa79b] bg-white pl-1 pt-px">
      <Swatch color="#f28e2b" label="Area Planted" spacing="tracking-[0.7px]" />
      <Swatch color="#59a14f" label="Area Harvested" spacing="tracking-[0.68px]" />
    </div>
  </div>
);

const ProductionChart = () => (
  <div className="relative h-[429px] w-[905px]">
    <svg className="block h-full w-full" viewBox="835 662 905 429">
      <T x={1290.5} y={684.5} w={367} size={23.5} fill="#333" weight={400}>Production and Yield Over Time</T>
      {[799.5, 902, 1004.5].map((y) => <path key={y} d={`M921,${y}H1649`} stroke="#f4f4f4" strokeWidth="1.6" />)}
      {PRODUCTION.map((v, i) => {
        const y = 560.5 + v / 3;
        return <rect key={i} x={962.7 + i * 21.82} y={y} width={21.82} height={1004.6 - y} fill="#b07aa1" stroke="#cfc6cc" strokeWidth="1.5" />;
      })}
      <path d="M927.5,712V1005M1649.5,712V1005" stroke="#cacaca" strokeWidth="1.2" />
      {[743, 796, 847, 900, 952.5, 1004.5].map((y) => <path key={y} d={`M1650,${y}h4`} stroke="#efefef" />)}
      {YEARS.map((y, i) => <path key={y} d={`M${1026.9 + i * 109.1},1005v8`} stroke="#efefef" />)}
      {([["2.00B", 800], ["1.00B", 902.5], ["0.00B", 993.5]] as const).map(([t, y]) => <T key={t} x={918} y={y} w={41} anchor="end">{t}</T>)}
      {([["50", 743], ["40", 796], ["30", 847], ["20", 900.5], ["10", 952.5], ["0", 993.5]] as const).map(([t, y]) => (
        <T key={t} x={1657.5} y={y} w={t.length * 9} anchor="start">{t}</T>
      ))}
      {YEARS.map((y, i) => <T key={y} x={1026.4 + i * 109.1} y={1024.5} w={36}>{String(y)}</T>)}
      <T x={1287.6} y={1057} w={98} size={14.5} fill="#333" weight={400}>Calendar Year</T>
      <T x={857} y={856.5} w={113} size={13.5} fill="#444" weight={400} rot>Crop Production</T>
      <T x={1719} y={856.5} w={112} size={13.5} fill="#444" weight={400} rot>Aggregate Yield</T>
      <polyline points={line(YIELD, 961.7, 21.82)} fill="none" stroke="#4e79a7" strokeWidth="3.8" strokeLinejoin="round" strokeLinecap="round" />
      <T x={1599.5} y={734.5} w={40} fill="#222" anchor="start">51.67</T>
    </svg>
    <div className="absolute left-[162px] top-[290px] h-[50px] w-[169px] border border-[#b9b4a6] bg-white pl-[5px] pt-0.5">
      <Swatch color="#4e79a7" label="Aggregate Yield" spacing="tracking-[0.85px]" />
      <Swatch color="#b07aa1" label="Crop Production" spacing="tracking-[0.5px]" />
    </div>
  </div>
);

/* ---------- page ---------- */
const Kpi = ({ value, unit, label, open, spacing = "tracking-[0.75px]" }: { value: string; unit?: string; label: string; open?: boolean; spacing?: string }) => (
  <div className={`flex flex-col items-center border-y border-l border-[#d4d4d4] pt-[7px] ${open ? "border-r border-r-transparent" : "border-r"}`}>
    <div className="flex h-[32px] items-center gap-[6px] whitespace-nowrap text-[26px] leading-none text-[#3b3b3b]">
      <span className="font-[450] tracking-[1.25px]">{value}</span>
      {unit && <span className="pt-0.5 text-[22px] font-light tracking-[0.75px] text-[#5f5f5f]">{unit}</span>}
    </div>
    <div className={`flex h-[42px] items-center whitespace-nowrap text-[23px] font-light leading-none text-[#5f5f5f] ${spacing}`}>{label}</div>
  </div>
);

const CheckRow = ({ label }: { label: string }) => (
  <div className="flex h-[25px] items-center gap-[7px]">
    <svg className="h-[18px] w-[19px]" viewBox="0 0 19 18" fill="none">
      <rect x="0.75" y="0.75" width="17.5" height="16.5" fill="#fff" stroke="#707070" strokeWidth="1.2" />
      <path d="M4.8 9.3l3 3.4 6-8.6" stroke="#555" strokeWidth="1.7" />
    </svg>
    <span className="text-[14.5px] font-light leading-none tracking-[0.62px] text-[#444]">{label}</span>
  </div>
);

const Plus = ({ x, y, r, w }: { x: number; y: number; r: number; w: number }) => <path d={`M${x - r},${y}h${2 * r}M${x},${y - r}v${2 * r}`} strokeWidth={w} />;

const Toolbar = () => (
  <footer className="flex h-[34px] items-center justify-between border-b border-[#ccc] bg-[#f5f5f5] pl-[20px] pr-[14px]">
    <svg className="h-[26px] w-[140px]" viewBox="0 0 140 26" fill="none" stroke="#666">
      <Plus x={12} y={13} r={4} w={1.5} />
      <Plus x={6} y={8} r={3.2} w={1.3} /><Plus x={18} y={8} r={3.2} w={1.3} /><Plus x={6} y={18} r={3.2} w={1.3} /><Plus x={18} y={18} r={3.2} w={1.3} />
      <Plus x={12} y={4.5} r={2.4} w={1} /><Plus x={12} y={21.5} r={2.4} w={1} /><Plus x={3} y={13} r={2.2} w={1} /><Plus x={21} y={13} r={2.2} w={1} />
      <path d="M30.5 13.3h12M36.5 7v12.3M85.500 3.500v18" stroke="#555" strokeWidth="1.7" />
      <g fill="#555" stroke="none" fontSize="18" textAnchor="middle" style={{ fontFamily: "Lato, sans-serif" }}>
        {([["a", 54.5], ["b", 72], ["e", 99.5], ["a", 116], ["u", 132]] as const).map(([c, x]) => <text key={x} x={x} y="19.5">{c}</text>)}
      </g>
    </svg>
    <svg className="h-[26px] w-[272px] text-[#666]" viewBox="0 0 272 26" fill="none" stroke="currentColor" strokeWidth="1.4">
      <g stroke="#b0b0b0">
        <path d="M7.5 6l-7 7.2 7 7.2M.5 13.2h15.5" />
        <path d="M59.5 6l7 7.2-7 7.2M66.5 13.2H51" />
        <path d="M102 4v18.5M111.500 6l-7 7.2 7 7.2M104.5 13.2h15.5" />
      </g>
      <circle cx="154.5" cy="14" r="3" /><circle cx="165" cy="7.5" r="3" /><circle cx="165" cy="20" r="3" />
      <path d="M157 12.4l5.5-3.400M157 15.700l5.500 3" />
      <path d="M204.5 14.5h-4.5V5h17.5v9.500H213M208.700 9v11" />
      <path d="M205 18h7.5l-3.750 5.200z" fill="currentColor" stroke="none" />
      <path d="M253.5 9h13v9.500h-13zM254 5.500h-4.500v4M266 5.500h4.500v4M254 22h-4.500v-4M266 22h4.500v-4" />
    </svg>
  </footer>
);

const panel = "absolute border border-[#aca796] bg-white text-[#333]";
const caption = "flex items-center pl-px text-[14.5px] leading-none tracking-[0.35px]";

export default function App() {
  return (
    <div className="h-[1132px] w-[1763px] overflow-hidden bg-white pl-[6px] pt-[5px] text-[#333]" style={{ fontFamily: '"Open Sans", "Noto Sans", sans-serif' }}>
      <div className="flex h-[1120px] w-[1751px] flex-col border-x border-t border-[#f4f4f4]">
        <main className="flex h-[1085px] flex-col px-[15px] pt-[15px]">
          <header className="flex h-[43px] w-[1718px] shrink-0 items-center justify-center whitespace-pre border border-[#aaa79b] text-[24px] leading-none">
            <span className="tracking-[0.62px]">{"US  2019 - Wheat (All): Area Planted by County"}</span>
          </header>

          <section className="relative mt-[3px] h-[490px] w-[1718px] shrink-0 bg-[#c0d1d0]">
            <UsMap />
            <div className="pointer-events-none absolute inset-0 border border-[#dadddc]" />

            <div className={`${panel} left-[70px] top-[39px] h-[70px] w-[229px]`}>
              <div className={`${caption} h-[24px]`}>Commodity Name</div>
              <Select value="Wheat" className="ml-[2px]" />
            </div>
            <div className={`${panel} left-[70px] top-[119px] h-[141px] w-[229px]`}>
              <div className={`${caption} h-[24px]`}>Commodity Class Variety</div>
              <div className="flex flex-col pl-[5px]">
                {["(All)", "Spring, (Excl Durum)", "Spring, Durum", "Winter"].map((l) => <CheckRow key={l} label={l} />)}
              </div>
            </div>
            <div className={`${panel} left-[70px] top-[270px] h-[70px] w-[229px]`}>
              <div className={`${caption} h-[24px] justify-between pr-[7px]`}>
                <span className="pt-0.5">Year</span>
                <Caret className="mb-1.5 text-[#777]" />
              </div>
              <Select value="2019" className="ml-[2px]" />
            </div>
            <p className="absolute left-[70px] top-[352px] whitespace-pre text-[14.5px] font-light leading-[22.2px] tracking-[0.5px] text-[#566060]">
              {"Note: Select only one Class\nwhen looking at Corn (grain\ndoes not compare to silage)!"}
            </p>
            <div className="absolute bottom-[1px] left-[3px] flex items-center whitespace-pre text-[14px] leading-none">
              <span className="flex h-[18px] w-[232px] items-center bg-[#e6edec] px-[2px] font-medium tracking-[-0.15px] text-[#6e7373]">{"© 2020 Mapbox  © OpenStreetMap"}</span>
              <span className="pl-[6px] pt-0.5 font-light tracking-[0.22px] text-[#4d5454]">Data from USDA NASS, Jan. 01, 1990 - May, 06, 2020</span>
            </div>

            <div className={`${panel} left-[1489px] top-[292px] h-[70px] w-[181px]`}>
              <div className={`${caption} h-[24px]`}>Key Metric</div>
              <Select value="Area Planted" className="mx-px" />
            </div>
            <div className="absolute left-[1494px] top-[372px] flex w-[171px] flex-col">
              <div className="flex h-[20px] items-center justify-center text-[15px] leading-none tracking-[0.4px]">County</div>
              <div className="mt-[10px] flex h-[20px] border border-[#a9a493]">
                {["bg-[#f4c2b8]", "bg-[#f3b0a4]", "bg-[#f2a192]", "bg-[#ee907c]", "bg-[#ea7f6e]", "bg-[#e56b62]", "bg-[#dc585c]", "bg-[#cf4a59]", "bg-[#c03d55]"].map((c) => (
                  <span key={c} className={`flex-[18] ${c}`} />
                ))}
                <span className="flex-[10] bg-[#b03456]" />
              </div>
              <div className="mt-[4px] flex justify-between text-[15px] font-light leading-[17px] tracking-[0.5px] text-[#3d4444]">
                <span>500</span>
                <span>381,000</span>
              </div>
            </div>
          </section>

          <section className="mt-[10px] grid h-[82px] w-[1718px] shrink-0 grid-cols-[421px_423px_422px_422px] gap-x-[10px] bg-white">
            <Kpi value="45,158,000" label="Acres Planted" open />
            <Kpi value="37,162,000" label="Acres Harvested" />
            <Kpi value="1,920,139,000" unit="BU" label="Crop Production" spacing="tracking-[0.4px]" />
            <Kpi value="51.67" unit="BU / ACRE" label="Yield" />
          </section>

          <section className="mt-[13px] flex w-[1718px]">
            <AcreageChart />
            <ProductionChart />
          </section>
        </main>
        <Toolbar />
      </div>
    </div>
  );
}
